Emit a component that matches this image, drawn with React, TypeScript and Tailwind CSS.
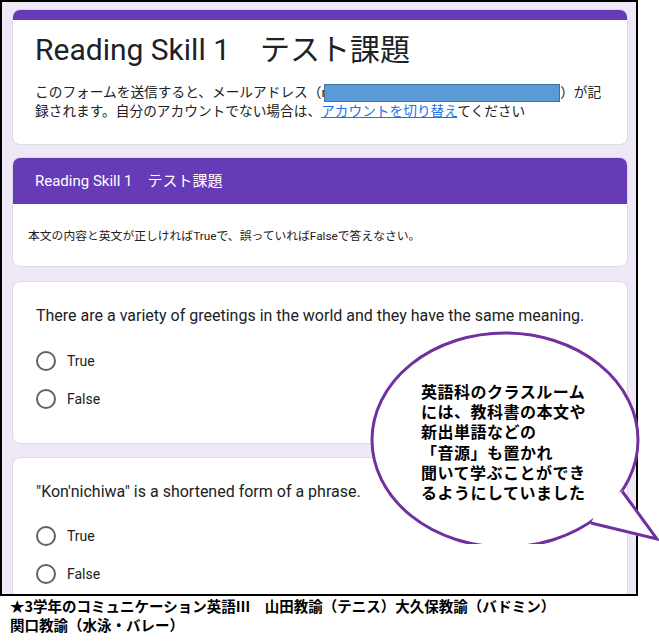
import React from "react";

const FONT = "font-[Roboto,'Noto_Sans_CJK_JP',sans-serif]";

function Radio({ label }: { label: string }) {
  return (
    <div className="flex items-center h-[38px]">
      <span className="w-[20px] h-[20px] rounded-full border-2 border-[#5f6368]" />
      <span className="ml-[11px] text-[14px] text-[#202124]">{label}</span>
    </div>
  );
}

function Question({ text, gap }: { text: string; gap: string }) {
  return (
    <div className="w-[616px] shrink-0 bg-white rounded-lg border border-[#dadce0] pl-[23px] pt-[23px] pb-[25px]">
      <div className="text-[16px] leading-[22px] text-[#202124]">{text}</div>
      <div className={gap}>
        <Radio label="True" />
        <Radio label="False" />
      </div>
    </div>
  );
}

export default function App() {
  return (
    <div className={`relative w-[659px] h-[644px] bg-white overflow-hidden ${FONT}`}>
      {/* framed screenshot of the form */}
      <div className="w-[638px] h-[596px] border-2 border-black bg-[#efe9f7] overflow-hidden pl-[10px] pt-[7px] flex flex-col">
        {/* header card */}
        <div className="w-[616px] shrink-0 bg-white rounded-lg border border-[#dadce0] overflow-hidden">
          <div className="h-[10px] bg-[#673ab7]" />
          <div className="pl-[22px] pt-[10px] pb-[23px]">
            <div className="text-[30px] leading-[40px] text-[#202124]">Reading Skill 1　テスト課題</div>
            <div className="mt-[13px] text-[13.7px] leading-[19px] text-[#202124]">
              このフォームを送信すると、メールアドレス（r
              <span className="inline-block align-middle -ml-[2px] w-[236px] h-[18px] bg-[#5b9bd5] border border-[#41719c]" />
              ）が記
              <br />
              録されます。自分のアカウントでない場合は、
              <span className="text-[#1a73e8] underline">アカウントを切り替え</span>
              てください
            </div>
          </div>
        </div>

        {/* section card */}
        <div className="mt-[12px] w-[616px] shrink-0 bg-white rounded-lg border border-[#dadce0] overflow-hidden">
          <div className="h-[46px] bg-[#673ab7] flex items-center pl-[22px] text-white text-[15px]">
            Reading Skill 1　テスト課題
          </div>
          <div className="h-[62px] pl-[15px] pt-[25px] text-[11.8px] leading-[14px] text-[#202124]">
            本文の内容と英文が正しければTrueで、誤っていればFalseで答えなさい。
          </div>
        </div>

        <div className="mt-[14px]">
          <Question
            text="There are a variety of greetings in the world and they have the same meaning."
            gap="mt-[15px]"
          />
        </div>
        <div className="mt-[13px]">
          <Question text={'"Kon\'nichiwa" is a shortened form of a phrase.'} gap="mt-[14px]" />
        </div>
      </div>

      {/* caption */}
      <div className="pl-[10px] text-[14.5px] leading-[19px] font-bold text-black font-['Noto_Sans_CJK_JP',sans-serif]">
        <div>★3学年のコミュニケーション英語Ⅲ　山田教諭（テニス）大久保教諭（バドミン）</div>
        <div>関口教諭（水泳・バレー）</div>
      </div>

      {/* speech bubble */}
      <svg className="absolute left-[368px] top-[328px]" width="292" height="216" viewBox="368 328 292 216">
        <ellipse cx="505" cy="440" rx="133" ry="107" fill="#fff" stroke="#7030a0" strokeWidth="3" />
        <polygon points="623,490 658,540 590,525 600,505" fill="#fff" />
        <polyline points="622,491 657,539 591,523" fill="none" stroke="#7030a0" strokeWidth="3" strokeLinejoin="miter" />
      </svg>
      <div className="absolute left-[421px] top-[381px] text-[16px] leading-[20.2px] font-bold tracking-[0.5px] text-black font-['Noto_Sans_CJK_JP',sans-serif]">
        英語科のクラスルーム
        <br />
        には、教科書の本文や
        <br />
        新出単語などの
        <br />
        「音源」も置かれ
        <br />
        聞いて学ぶことができ
        <br />
        るようにしていました
      </div>
    </div>
  );
}
